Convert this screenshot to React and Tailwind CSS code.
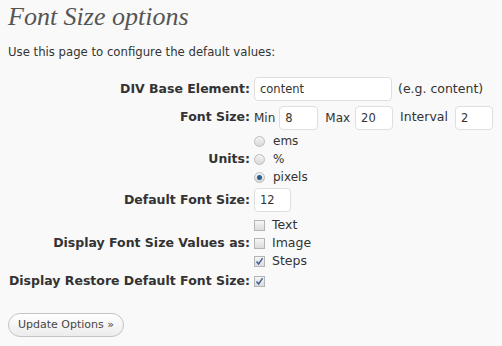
import React from 'react';

const Field = ({ value, w }) => (
  <input
    type="text"
    defaultValue={value}
    className={`${w} h-[24px] bg-white border border-[#dfdfdf] rounded-[4px] px-[5px] text-[11.5px] text-[#333] outline-none`}
    style={{ fontFamily: '"DejaVu Sans", Verdana, sans-serif' }}
  />
);

const Radio = ({ checked }) => (
  <span className="w-[11px] h-[11px] rounded-full border border-[#bdbdbd] bg-gradient-to-b from-[#f4f4f4] to-[#d9d9d9] flex items-center justify-center shrink-0">
    {checked && <span className="w-[5px] h-[5px] rounded-full bg-[#2b5d8f]" />}
  </span>
);

const Check = ({ checked }) => (
  <span className="w-[11px] h-[11px] border border-[#b5b5b5] bg-gradient-to-b from-[#f6f6f6] to-[#dcdcdc] flex items-center justify-center shrink-0">
    {checked && (
      <svg width="9" height="9" viewBox="0 0 9 9">
        <path d="M1.5 4.5 L3.6 7 L7.6 1.2" fill="none" stroke="#3a5f97" strokeWidth="1.4" />
      </svg>
    )}
  </span>
);

const Label = ({ children, className = '' }) => (
  <div className={`text-right font-bold text-[12.5px] flex items-center justify-end whitespace-nowrap ${className}`}>
    {children}
  </div>
);

export default function App() {
  return (
    <div
      className="min-h-screen bg-[#f9f9f9] text-[#333] text-[12px] px-2"
      style={{ fontFamily: '"DejaVu Sans", Verdana, sans-serif' }}
    >
      <h2
        className="pt-[2px] text-[26px] leading-[30px] italic text-[#555]"
        style={{ fontFamily: '"Liberation Serif", Georgia, serif' }}
      >
        Font Size options
      </h2>

      <p className="mt-[12px] leading-[16px] text-[11.7px]">Use this page to configure the default values:</p>

      <div className="mt-[17px] grid grid-cols-[242px_1fr] gap-x-1">
        <Label className="h-[24px]">DIV Base Element:</Label>
        <div className="flex items-center gap-[6px] h-[24px]">
          <Field value="content" w="w-[138px]" />
          <span className="text-[12.5px]">(e.g. content)</span>
        </div>

        <Label className="h-[25px] mt-[4px]">Font Size:</Label>
        <div className="flex items-center h-[25px] mt-[4px]">
          <span className="mr-[4px]">Min</span>
          <Field value="8" w="w-[39px]" />
          <span className="ml-[7px] mr-[5px]">Max</span>
          <Field value="20" w="w-[38px]" />
          <span className="ml-[7px] mr-[7px] text-[12.5px]">Interval</span>
          <Field value="2" w="w-[38px]" />
        </div>

        <Label className="mt-[2px]">Units:</Label>
        <div className="flex flex-col mt-[2px]">
          {[['ems', false], ['%', false], ['pixels', true]].map(([t, c]) => (
            <div key={t} className="flex items-center gap-[8px] h-[18px]">
              <Radio checked={c} />
              <span>{t}</span>
            </div>
          ))}
        </div>

        <Label className="h-[24px] mt-[2px]">Default Font Size:</Label>
        <div className="flex items-center h-[24px] mt-[2px]">
          <Field value="12" w="w-[37px]" />
        </div>

        <Label className="mt-[4px]">Display Font Size Values as:</Label>
        <div className="flex flex-col mt-[4px]">
          {[['Text', false], ['Image', false], ['Steps', true]].map(([t, c]) => (
            <div key={t} className="flex items-center gap-[7px] h-[18px]">
              <Check checked={c} />
              <span className="text-[12.5px]">{t}</span>
            </div>
          ))}
        </div>

        <Label className="h-[18px] mt-[2px]">Display Restore Default Font Size:</Label>
        <div className="flex items-center h-[18px] mt-[2px]">
          <Check checked />
        </div>
      </div>

      <button
        type="button"
        className="mt-[23px] w-[116px] h-[24px] rounded-full border border-[#c4c4c4] bg-gradient-to-b from-white to-[#ececec] text-[11px] text-[#464646] flex items-center justify-center"
      >
        Update Options »
      </button>
    </div>
  );
}
